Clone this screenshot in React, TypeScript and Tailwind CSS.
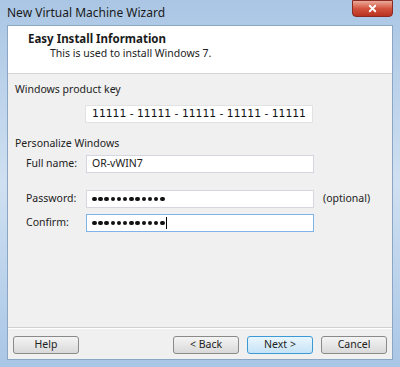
import { X } from "lucide-react";

const font = { fontFamily: '"Noto Sans", "Open Sans", sans-serif' };

function Field({ label, value, dots, focused, note }: { label: string; value?: string; dots?: number; focused?: boolean; note?: string }) {
  return (
    <div className="flex items-center h-[18px]">
      <span className="w-[78px] pl-[18px] text-[10.5px] text-[#222]">{label}</span>
      <div
        className={`w-[228px] h-[18px] bg-white border flex items-center px-[5px] ${
          focused ? "border-[#7fb4e6]" : "border-[#d4d8de]"
        }`}
      >
        {dots ? (
          <span className="flex items-center">
            {Array.from({ length: dots }).map((_, i) => (
              <span key={i} className="w-[4.5px] h-[4.5px] rounded-full bg-[#111] mr-[1.7px]" />
            ))}
            {focused && <span className="w-px h-[12px] bg-black" />}
          </span>
        ) : (
          <span className="text-[10.5px] text-[#222]">{value}</span>
        )}
      </div>
      {note && <span className="ml-[9px] text-[10.5px] text-[#222]">{note}</span>}
    </div>
  );
}

function Btn({ children, primary }: { children: string; primary?: boolean }) {
  return (
    <button
      className={`w-[66px] h-[18px] rounded-[3px] border text-[10.5px] text-[#222] flex items-center justify-center ${
        primary
          ? "border-[#3c9ad6] bg-gradient-to-b from-[#eaf6fd] to-[#c6e3f6]"
          : "border-[#8a8a8a] bg-gradient-to-b from-[#f4f4f4] to-[#d9d9d9]"
      }`}
    >
      {children}
    </button>
  );
}

export default function App() {
  return (
    <div
      className="w-[400px] h-[367px] flex flex-col bg-gradient-to-b from-[#aac6e4] via-[#cfe0f1] to-[#a9c6e6] overflow-hidden"
      style={font}
    >
      {/* title bar */}
      <div className="h-[25px] flex items-start justify-between">
        <span className="pl-[7px] pt-[4px] text-[12px] text-[#1a1a1a]">New Virtual Machine Wizard</span>
        <div className="mr-[7px] w-[41px] h-[17px] rounded-b-[4px] border border-[#8a2a20] bg-gradient-to-b from-[#e9a99a] via-[#d2533e] to-[#b8321f] flex items-center justify-center">
          <X className="w-[11px] h-[11px] text-white" strokeWidth={4} />
        </div>
      </div>

      {/* client */}
      <div className="mx-[7px] flex-1 flex flex-col border border-[#8ba6c4] bg-[#f0f0f0]">
        <div className="h-[48px] bg-white border-b border-[#d5d5d5] pt-[6px]">
          <div className="pl-[20px] text-[11.5px] font-bold text-[#1a1a1a] leading-[14px]">Easy Install Information</div>
          <div className="pl-[42px] text-[10.5px] text-[#222] leading-[14px]">This is used to install Windows 7.</div>
        </div>

        <div className="flex-1 flex flex-col border-b border-[#d0d0d0]">
          <div className="pl-[7px] pt-[8px] text-[10.5px] text-[#222] leading-[14px]">Windows product key</div>
          <div className="mt-[9px] ml-[77px] w-[228px] h-[18px] bg-white border border-[#e2e2e2] flex items-center justify-center">
            <span
              className="whitespace-nowrap text-[10.75px] text-[#111]"
              style={{ fontFamily: '"DejaVu Sans", sans-serif' }}
            >
              11111 - 11111 - 11111 - 11111 - 11111
            </span>
          </div>
          <div className="pl-[7px] pt-[13px] text-[10.5px] text-[#222] leading-[14px]">Personalize Windows</div>
          <div className="mt-[5px] flex flex-col">
            <Field label="Full name:" value="OR-vWIN7" />
            <div className="h-[17px]" />
            <Field label="Password:" dots={12} note="(optional)" />
            <div className="h-[6px]" />
            <Field label="Confirm:" dots={12} focused />
          </div>
        </div>

        <div className="h-[31px] border-t border-white flex items-start pt-[7px] px-[5px]">
          <Btn>Help</Btn>
          <div className="flex-1" />
          <div className="flex gap-[8px]">
            <Btn>&lt; Back</Btn>
            <Btn primary>Next &gt;</Btn>
            <Btn>Cancel</Btn>
          </div>
        </div>
      </div>
      <div className="h-[7px]" />
    </div>
  );
}
